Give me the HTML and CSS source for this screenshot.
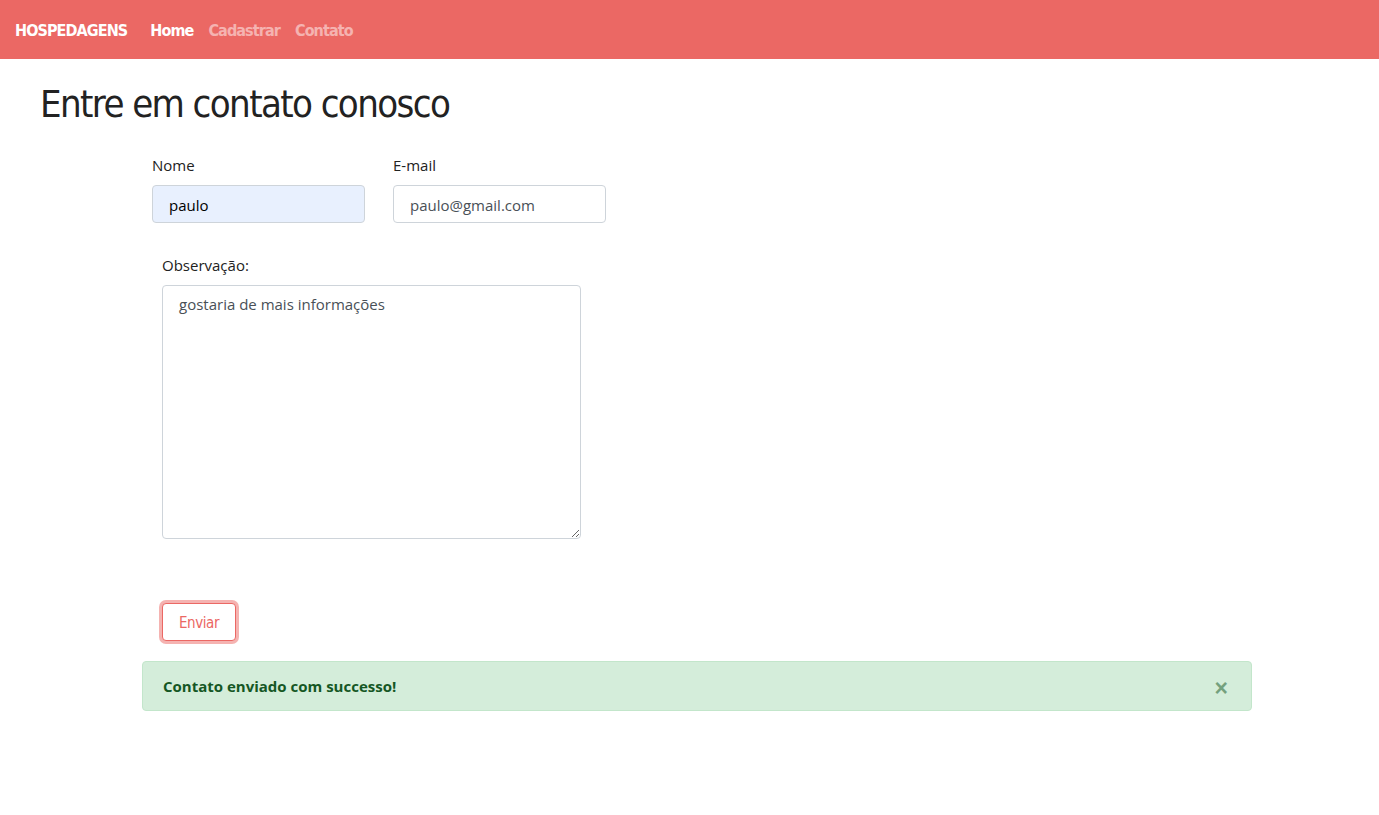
FILE: index.html
```html
<!DOCTYPE html>
<html lang="pt">
<head>
<meta charset="utf-8">
<title>Hospedagens - Contato</title>
<link rel="stylesheet" href="styles.css">
</head>
<body>
<nav class="navbar">
  <a class="brand" href="#">HOSPEDAGENS</a>
  <ul class="nav-links">
    <li><a class="active" href="#">Home</a></li>
    <li><a href="#">Cadastrar</a></li>
    <li><a href="#">Contato</a></li>
  </ul>
</nav>
<main class="page">
  <h1 class="title">Entre em contato conosco</h1>
  <form class="form">
    <div class="row">
      <div class="field">
        <label class="label" for="nome">Nome</label>
        <input class="input input-autofill" id="nome" type="text" value="paulo">
      </div>
      <div class="field">
        <label class="label" for="email">E-mail</label>
        <input class="input" id="email" type="email" value="paulo@gmail.com">
      </div>
    </div>
    <div class="obs">
      <label class="label" for="obs">Observação:</label>
      <textarea class="textarea" id="obs">gostaria de mais informações</textarea>
    </div>
    <div class="actions">
      <button class="btn" type="button">Enviar</button>
    </div>
  </form>
  <div class="alert">
    <span class="alert-text">Contato enviado com successo!</span>
    <button class="close" type="button" aria-label="Fechar">×</button>
  </div>
</main>
</body>
</html>
```
FILE: styles.css
```css
* { box-sizing: border-box; }
html, body { margin: 0; padding: 0; }
body {
  font-family: "Segoe UI", "Open Sans", "Noto Sans", sans-serif;
  font-size: 15px;
  color: #222;
  background: #fff;
}
.navbar {
  height: 59px;
  background: #eb6864;
  display: flex;
  align-items: center;
  padding: 2px 15px 0;
  font-family: "DejaVu Sans Condensed", "DejaVu Sans", sans-serif;
  font-stretch: condensed;
}
.brand {
  color: #fff;
  text-decoration: none;
  font-size: 16px;
  font-weight: bold;
  margin-right: 23px;
  letter-spacing: -0.9px;
}
.nav-links {
  list-style: none;
  margin: 0;
  padding: 0;
  display: flex;
  gap: 15px;
}
.nav-links a {
  color: rgba(255,255,255,0.5);
  text-decoration: none;
  font-size: 16px;
  font-weight: bold;
  letter-spacing: -0.9px;
}
.nav-links a.active { color: #fff; }
.title {
  font-family: "DejaVu Sans Condensed", "DejaVu Sans", sans-serif;
  font-stretch: condensed;
  font-weight: normal;
  font-size: 38px;
  letter-spacing: -1.6px;
  color: #222;
  margin: 21px 0 0 40px;
  line-height: 48px;
}
.form {
  margin: 26px 0 0 152px;
}
.row {
  display: flex;
  gap: 28px;
}
.field { display: flex; flex-direction: column; width: 213px; }
.label {
  font-size: 15px;
  line-height: 22px;
  margin-bottom: 9px;
  color: #222;
}
.input {
  height: 38px;
  border: 1px solid #ced4da;
  border-radius: 4px;
  padding: 1px 16px 0;
  font-family: inherit;
  font-size: 15px;
  color: #495057;
  background: #fff;
}
.input-autofill { background: #e8f0fe; color: #000; }
.obs {
  margin: 31px 0 0 10px;
  display: flex;
  flex-direction: column;
  width: 419px;
}
.textarea {
  height: 254px;
  border: 1px solid #ced4da;
  border-radius: 4px;
  padding: 8px 16px;
  font-family: inherit;
  font-size: 15px;
  color: #495057;
  resize: vertical;
}
.actions { margin: 64px 0 0 10px; }
.btn {
  height: 38px;
  width: 74px;
  background: #fff;
  border: 1px solid #eb6864;
  border-radius: 4px;
  color: #eb6864;
  font-family: "DejaVu Sans Condensed", "DejaVu Sans", sans-serif;
  font-stretch: condensed;
  font-size: 15px;
  letter-spacing: -0.4px;
  box-shadow: 0 0 0 3px rgba(235,104,100,0.5);
  padding: 2px 0 0;
}
.alert {
  margin: 20px 0 0 142px;
  width: 1110px;
  height: 50px;
  background: #d4edda;
  border: 1px solid #c3e6cb;
  border-radius: 4px;
  color: #155724;
  display: flex;
  align-items: center;
  justify-content: space-between;
  padding: 0 20px;
}
.alert-text { font-weight: bold; font-size: 15px; }
.close {
  background: none;
  border: 0;
  color: #155724;
  opacity: 0.5;
  font-size: 23px;
  font-weight: bold;
  line-height: 1;
  padding: 4px 0 0 0;
  margin-right: 3px;
  font-family: "Liberation Sans", sans-serif;
}
```
